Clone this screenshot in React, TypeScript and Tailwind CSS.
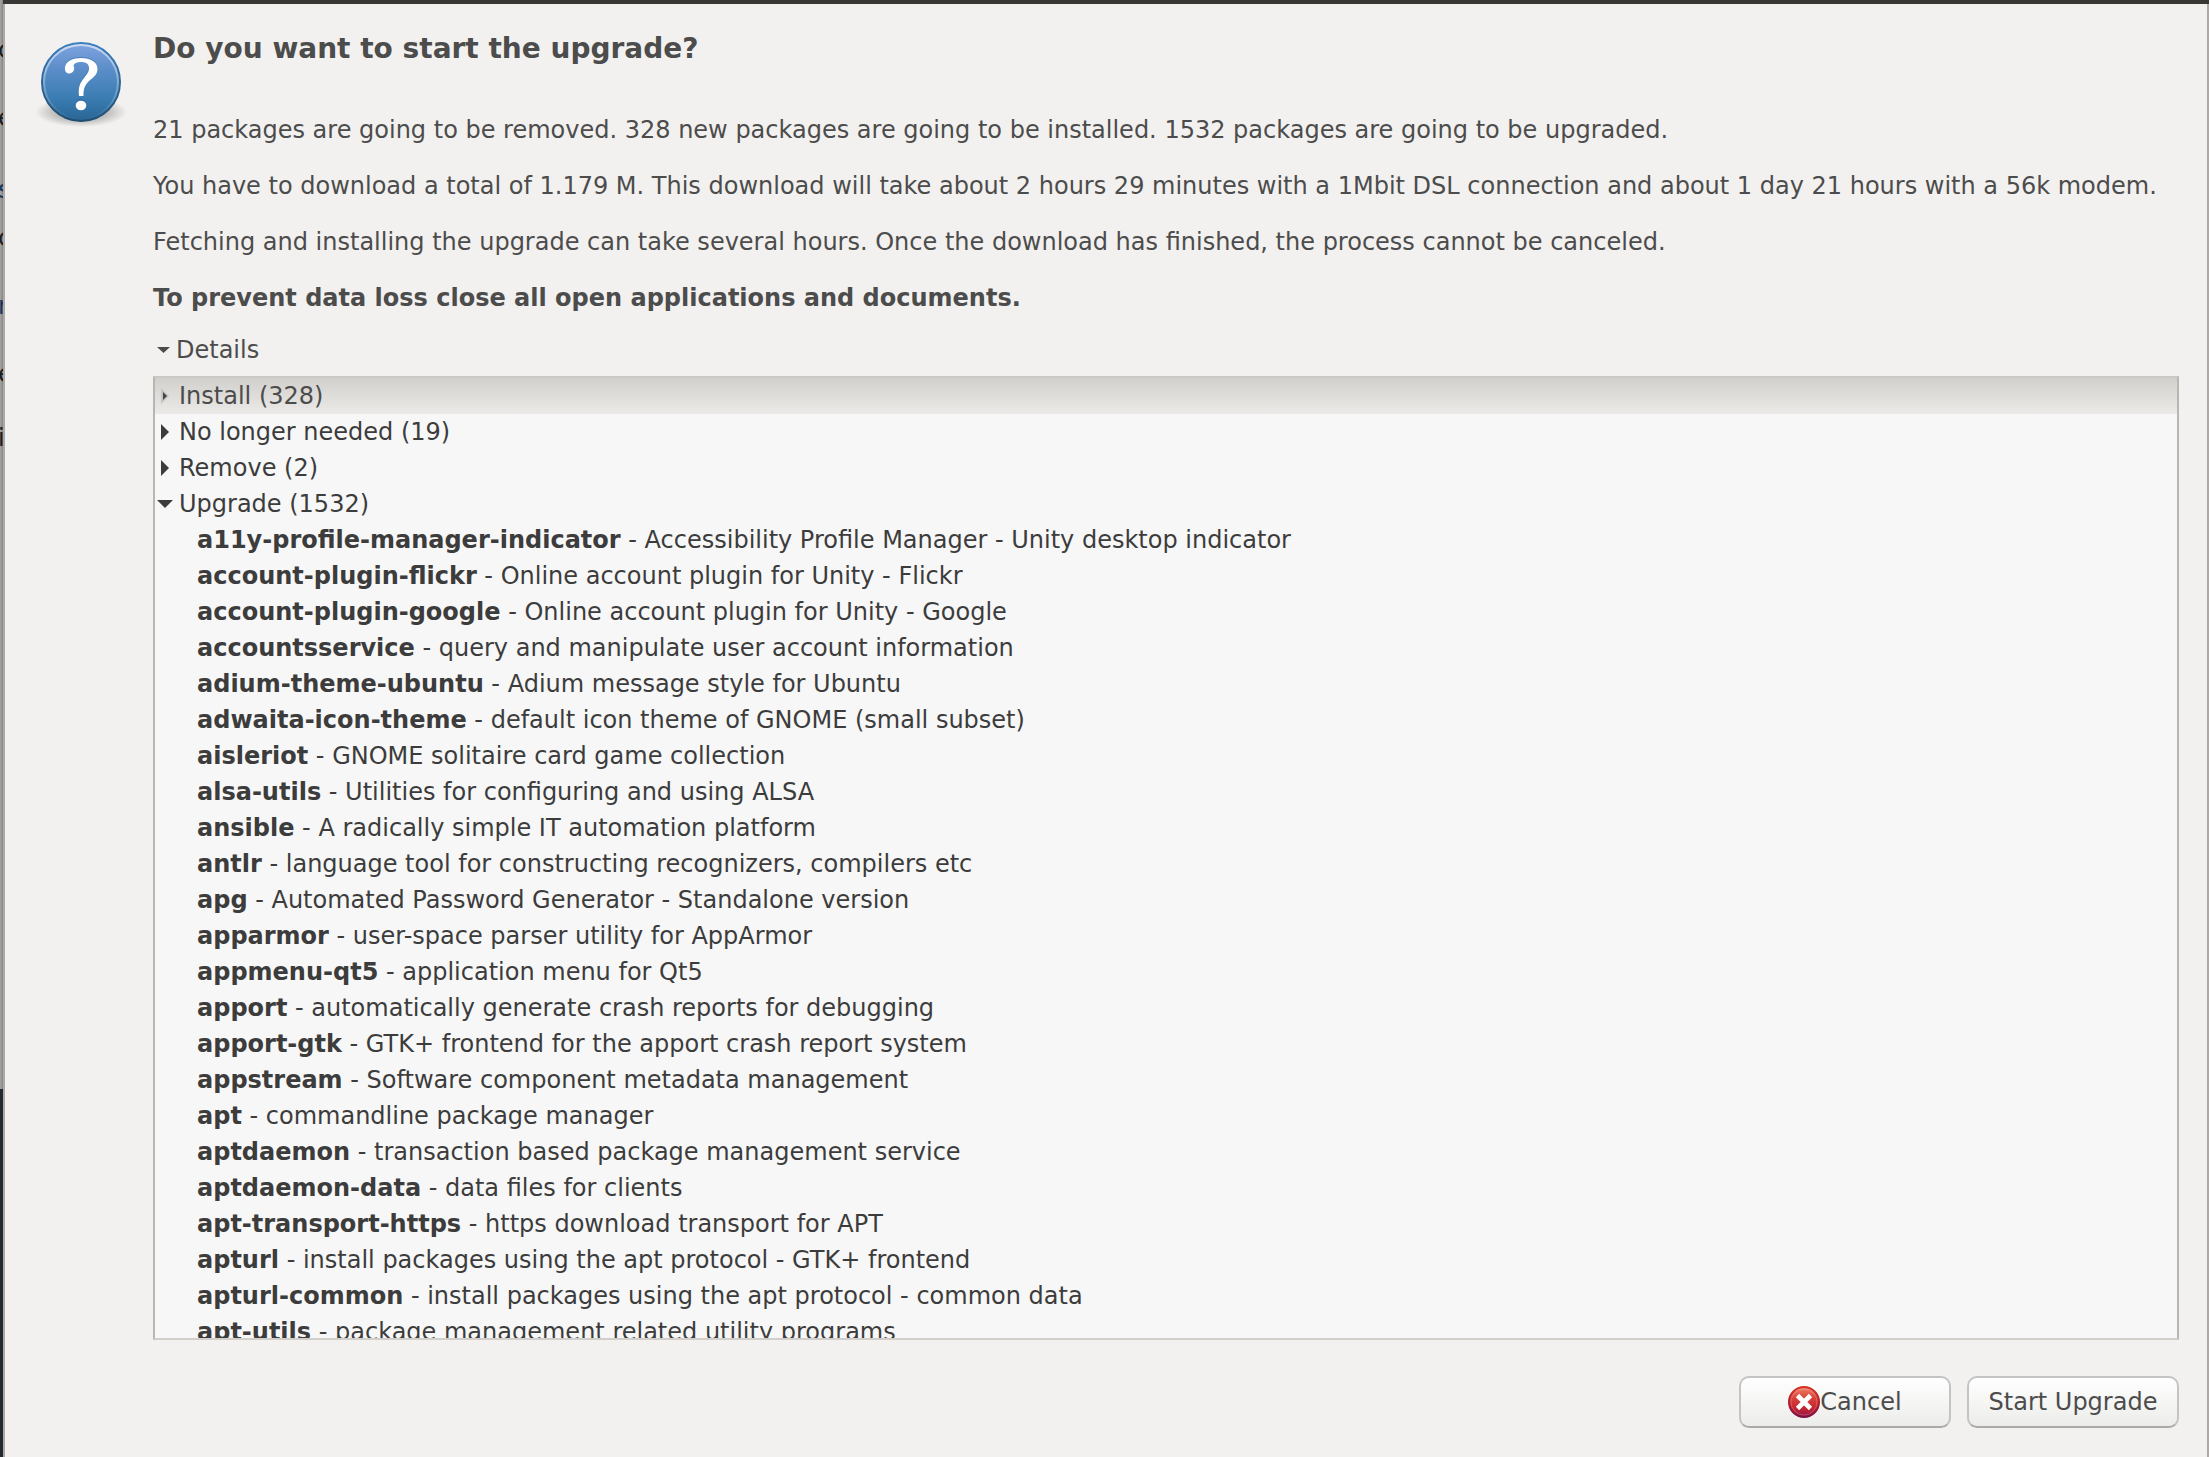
import { useState } from "react";

const packages: [string, string][] = [
  ["a11y-profile-manager-indicator", "Accessibility Profile Manager - Unity desktop indicator"],
  ["account-plugin-flickr", "Online account plugin for Unity - Flickr"],
  ["account-plugin-google", "Online account plugin for Unity - Google"],
  ["accountsservice", "query and manipulate user account information"],
  ["adium-theme-ubuntu", "Adium message style for Ubuntu"],
  ["adwaita-icon-theme", "default icon theme of GNOME (small subset)"],
  ["aisleriot", "GNOME solitaire card game collection"],
  ["alsa-utils", "Utilities for configuring and using ALSA"],
  ["ansible", "A radically simple IT automation platform"],
  ["antlr", "language tool for constructing recognizers, compilers etc"],
  ["apg", "Automated Password Generator - Standalone version"],
  ["apparmor", "user-space parser utility for AppArmor"],
  ["appmenu-qt5", "application menu for Qt5"],
  ["apport", "automatically generate crash reports for debugging"],
  ["apport-gtk", "GTK+ frontend for the apport crash report system"],
  ["appstream", "Software component metadata management"],
  ["apt", "commandline package manager"],
  ["aptdaemon", "transaction based package management service"],
  ["aptdaemon-data", "data files for clients"],
  ["apt-transport-https", "https download transport for APT"],
  ["apturl", "install packages using the apt protocol - GTK+ frontend"],
  ["apturl-common", "install packages using the apt protocol - common data"],
  ["apt-utils", "package management related utility programs"],
];

function QuestionIcon() {
  return (
    <svg width="92" height="92" viewBox="0 0 92 92" aria-hidden="true">
      <defs>
        <linearGradient id="q-fill" x1="0" y1="0" x2="0" y2="1">
          <stop offset="0" stopColor="#7fa3e0" />
          <stop offset="0.35" stopColor="#5a8dc8" />
          <stop offset="0.7" stopColor="#3b7db3" />
          <stop offset="1" stopColor="#286595" />
        </linearGradient>
        <linearGradient id="q-edge" x1="0" y1="0" x2="0" y2="1">
          <stop offset="0" stopColor="#3c7fbd" />
          <stop offset="1" stopColor="#204d70" />
        </linearGradient>
        <linearGradient id="q-rim" x1="0" y1="0" x2="0" y2="1">
          <stop offset="0" stopColor="#ffffff" stopOpacity="0.6" />
          <stop offset="0.7" stopColor="#ffffff" stopOpacity="0.2" />
          <stop offset="1" stopColor="#ffffff" stopOpacity="0" />
        </linearGradient>
        <radialGradient id="q-shadow">
          <stop offset="0" stopColor="#000000" stopOpacity="0.4" />
          <stop offset="0.6" stopColor="#000000" stopOpacity="0.2" />
          <stop offset="1" stopColor="#000000" stopOpacity="0" />
        </radialGradient>
      </defs>
      <ellipse cx="46" cy="75" rx="46" ry="15" fill="url(#q-shadow)" />
      <circle cx="46" cy="45" r="39" fill="url(#q-fill)" stroke="url(#q-edge)" strokeWidth="2" />
      <circle cx="46" cy="45" r="37" fill="none" stroke="url(#q-rim)" strokeWidth="2" />
      <g>
        <path
          d="M44 58C43 49 45 45 49 40C53 35 54 33 54 30C54 26 51 24 46 24C42 24 39 25 38.500 28C40 29 39.500 35 34.500 35.500C31 35.500 29.500 33 30 29C31 23 38 20 46 20C56 20 62.500 24 62.500 31C62.500 36 59 39 54 43C50 47 48.500 50 48.500 58Z"
          fill="#2c6299"
          opacity="0.5"
        />
        <path
          d="M44 59C43 50 45 46 49 41C53 36 54 34 54 31C54 27 51 25 46 25C42 25 39 26 38.500 29C40 30 39.500 36 34.500 36.500C31 36.500 29.500 34 30 30C31 24 38 21 46 21C56 21 62.500 25 62.500 32C62.500 37 59 40 54 44C50 48 48.500 51 48.500 59Z"
          fill="#ffffff"
        />
        <circle cx="46" cy="67" r="5" fill="#2c6299" opacity="0.5" />
        <ellipse cx="46" cy="68.500" rx="5.300" ry="4.800" fill="#ffffff" />
      </g>
    </svg>
  );
}

function CancelIcon() {
  return (
    <svg width="32" height="32" viewBox="0 0 32 32" aria-hidden="true">
      <defs>
        <linearGradient id="c-fill" x1="0" y1="0" x2="0" y2="1">
          <stop offset="0" stopColor="#f08066" />
          <stop offset="0.35" stopColor="#d9453c" />
          <stop offset="0.7" stopColor="#c6242f" />
          <stop offset="1" stopColor="#94164a" />
        </linearGradient>
        <linearGradient id="c-edge" x1="0" y1="0" x2="0" y2="1">
          <stop offset="0" stopColor="#d63226" />
          <stop offset="0.6" stopColor="#ab1c30" />
          <stop offset="1" stopColor="#7a1040" />
        </linearGradient>
      </defs>
      <circle cx="16" cy="16" r="15" fill="url(#c-fill)" stroke="url(#c-edge)" strokeWidth="2" />
      <circle cx="16" cy="16" r="13" fill="none" stroke="#ffffff" strokeOpacity="0.2" />
      <path d="M9.500 9.500L22.500 22.500M22.500 9.500L9.500 22.500" stroke="#ffffff" strokeWidth="4.600" />
    </svg>
  );
}

function Arrow({ open, small = false }: { open: boolean; small?: boolean }) {
  if (small && !open) {
    return (
      <svg className="shrink-0" width="16" height="16" viewBox="0 0 16 16" aria-hidden="true">
        <path d="M4 0L12 8L4 16Z" fill="#c6c4c2" />
        <path d="M6 4L10 8L6 12Z" fill="#454545" />
      </svg>
    );
  }
  return (
    <svg className="shrink-0" width="16" height="16" viewBox="0 0 16 16" aria-hidden="true">
      {open ? <path d="M0 4H16L8 12Z" fill="#3c3c3c" /> : <path d="M4 0L12 8L4 16Z" fill="#3c3c3c" />}
    </svg>
  );
}

function Group({ label, open, selected = false, onToggle }: { label: string; open: boolean; selected?: boolean; onToggle: () => void }) {
  return (
    <button
      type="button"
      aria-expanded={open}
      onClick={onToggle}
      className={
        selected
          ? "flex h-9 w-full items-center gap-1.5 bg-linear-to-b from-[#d2d0cc] to-[#ebeae8] pl-0.5 text-left text-[#4c4c4c]"
          : "flex h-9 w-full items-center gap-1.5 pl-0.5 text-left"
      }
    >
      <Arrow open={open} small={selected} />
      {label}
    </button>
  );
}

const dialogButton =
  "flex h-13 w-53 items-center justify-center rounded-[10px] border-2 border-[#c4c4c4] border-b-[#a9a9a9] bg-linear-to-b from-white to-[#ececea] whitespace-nowrap";

export default function App() {
  const [details, setDetails] = useState(true);
  const [install, setInstall] = useState(false);
  const [unneeded, setUnneeded] = useState(false);
  const [remove, setRemove] = useState(false);
  const [upgrade, setUpgrade] = useState(true);

  return (
    <div className="flex h-screen overflow-hidden bg-[#23292e] font-['DejaVu_Sans',sans-serif] text-[24px] leading-7 text-[#4c4c4c]">
      <div aria-hidden="true" className="relative w-[3px] shrink-0 overflow-hidden text-[#1c1c1c]">
        <div className="h-[1089px] bg-linear-to-r from-[#a6a6a6] to-[#858585]" />
        <div className="absolute top-0 -left-0.5 flex flex-col">
          <span className="mt-9 h-17">c</span>
          <span className="h-18">e</span>
          <span className="h-12 text-[#17365f]">s</span>
          <span className="h-17">c</span>
          <span className="h-17 text-[#17365f]">r</span>
          <span className="h-16">e</span>
          <span className="h-8">i</span>
        </div>
      </div>
      <div className="flex min-w-0 flex-1 flex-col border-t-4 border-t-[#3a3835]">
        <main className="flex min-h-0 flex-1 flex-col border-x-2 border-x-[#aea9a5] bg-[#f2f1ef] pr-7 pb-[29px]">
          <div className="flex min-h-0 flex-1">
            <div className="w-[148px] shrink-0 pt-[33px] pl-[30px]">
              <QuestionIcon />
            </div>
            <div className="flex min-w-0 flex-1 flex-col pt-[29px]">
              <h1 className="text-[28px] leading-8 font-bold">Do you want to start the upgrade?</h1>
              <div className="mt-[51px] flex flex-col gap-7 whitespace-nowrap">
                <p>21 packages are going to be removed. 328 new packages are going to be installed. 1532 packages are going to be upgraded.</p>
                <p>You have to download a total of 1.179 M. This download will take about 2 hours 29 minutes with a 1Mbit DSL connection and about 1 day 21 hours with a 56k modem.</p>
                <p>Fetching and installing the upgrade can take several hours. Once the download has finished, the process cannot be canceled.</p>
                <p className="font-bold">To prevent data loss close all open applications and documents.</p>
              </div>
              <button type="button" aria-expanded={details} onClick={() => setDetails(!details)} className="mt-6 flex items-center gap-1.5 self-start pl-1">
                <svg width="13" height="8" viewBox="0 0 13 8" aria-hidden="true">
                  <path d="M0 1H13L6.500 7Z" fill="#4c4c4c" />
                </svg>
                Details
              </button>
              {details && (
                <div className="mt-3 min-h-0 flex-1 overflow-hidden border-2 border-x-[#b9b6b1] border-t-[#cbc7c4] border-b-[#d2cfcb] bg-[#f7f7f7] text-[#3c3c3c]">
                  <Group label="Install (328)" selected open={install} onToggle={() => setInstall(!install)} />
                  <Group label="No longer needed (19)" open={unneeded} onToggle={() => setUnneeded(!unneeded)} />
                  <Group label="Remove (2)" open={remove} onToggle={() => setRemove(!remove)} />
                  <Group label="Upgrade (1532)" open={upgrade} onToggle={() => setUpgrade(!upgrade)} />
                  {upgrade && (
                    <ul className="pl-[42px] leading-9 whitespace-nowrap">
                      {packages.map(([name, summary]) => (
                        <li key={name}>
                          <b>{name}</b> - {summary}
                        </li>
                      ))}
                    </ul>
                  )}
                </div>
              )}
            </div>
          </div>
          <div className="mt-9 flex justify-end gap-4">
            <button type="button" className={dialogButton}>
              <CancelIcon />
              Cancel
            </button>
            <button type="button" className={dialogButton}>Start Upgrade</button>
          </div>
        </main>
      </div>
    </div>
  );
}
